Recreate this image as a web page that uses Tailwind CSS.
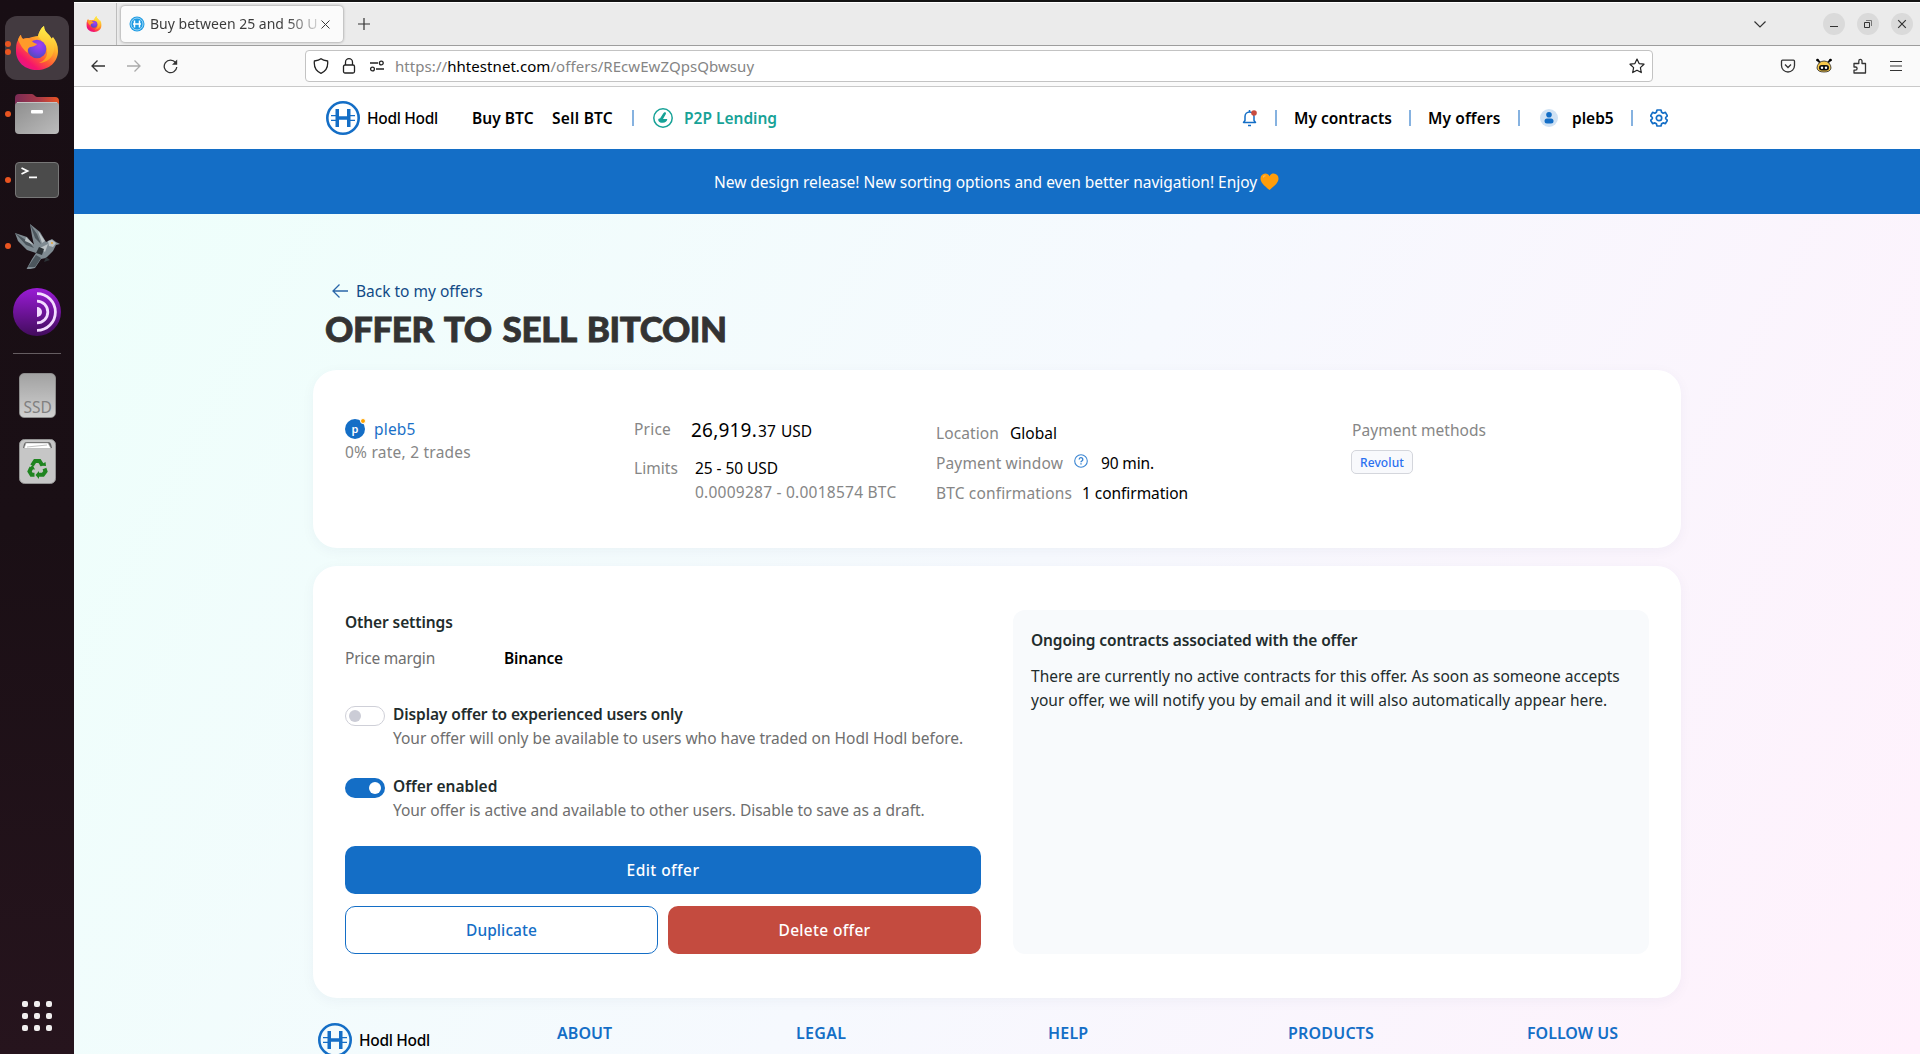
<!DOCTYPE html>
<html lang="en">
<head>
<meta charset="utf-8">
<title>Buy between 25 and 50 USD</title>
<script src="https://cdn.jsdelivr.net/npm/@tailwindcss/browser@4"></script>
</head>
<body class="w-[1920px] h-[1054px] overflow-hidden bg-[#141011] font-['Noto_Sans',sans-serif] text-[15.5px] leading-6 text-black">
<svg class="absolute size-0">
  <defs>
    <linearGradient id="ffBody" x1=".85" y1=".1" x2=".2" y2=".95"><stop offset="0" stop-color="#fff44f"/><stop offset=".3" stop-color="#ffb02a"/><stop offset=".6" stop-color="#ff5a36"/><stop offset=".85" stop-color="#f5156c"/><stop offset="1" stop-color="#e31587"/></linearGradient>
    <linearGradient id="ffFlame" x1=".5" y1="0" x2=".4" y2="1"><stop offset="0" stop-color="#fff14a"/><stop offset="1" stop-color="#ff9a1f"/></linearGradient>
    <radialGradient id="ffGlobe" cx=".6" cy=".3" r=".8"><stop offset="0" stop-color="#a93df0"/><stop offset=".5" stop-color="#7542e5"/><stop offset="1" stop-color="#4a4fa8"/></radialGradient>
    <linearGradient id="gray" x1="0" y1="0" x2="1" y2="1"><stop offset="0" stop-color="#8e8e8e"/><stop offset="1" stop-color="#bcbcbc"/></linearGradient>
    <linearGradient id="orange" x1="0" y1="0" x2="1" y2="0"><stop offset="0" stop-color="#7a2b55"/><stop offset=".55" stop-color="#a83a48"/><stop offset="1" stop-color="#ea5423"/></linearGradient>
    <linearGradient id="tor" x1="0" y1="0" x2="0" y2="1"><stop offset="0" stop-color="#9a1bd6"/><stop offset="1" stop-color="#420c5d"/></linearGradient>
    <symbol id="firefox" viewBox="0 0 42 44">
      <path fill="url(#ffBody)" d="M2 14C3 11 4 10 5 9c0 2 1 3 2 4 2-1 4-1 6-1 3-1 6-2 9-2 1-4 3-8 6-10 0 4 2 6 5 9 1 1 2 3 2 4l2-2c3 4 5 8 5 14 0 11-9 19-21 19S0 36 0 25c0-4 0-8 2-11z"/>
      <path fill="url(#ffFlame)" d="M22 10c1-4 3-8 6-10 0 4 2 6 5 9 4 5 6 9 5 15-1 8-8 13-15 13 6-2 9-7 8-13-1-6-5-8-9-14z"/>
      <circle cx="21" cy="23" r="9.3" fill="url(#ffGlobe)"/>
      <path fill="#ff9a2a" d="M2 14C3 11 4 9 5 9c0 2 1 3 2 4 3-1 5-1 7 0 2 2 3 4 7 5-1 2-5 3-7 3-2 1-3 3-2 6-5-3-8-9-10-13z"/>
    </symbol>
    <symbol id="hodl" viewBox="0 0 34 34">
      <circle cx="17" cy="17" r="15.7" fill="none" stroke="#146ec6" stroke-width="2.6"/>
      <path fill="#146ec6" d="M9.500 8h3.500v18h-3.500zM21 8h3.500v18h-3.500zM13 15.300h8v3.400h-8zM5 14h5v1.300H5zM5 18.700h5V20H5zM24 14h5v1.300h-5zM24 18.700h5V20h-5z"/>
    </symbol>
  </defs>
</svg>
<div class="flex h-[1054px] w-[1920px]">

  <!-- Dock -->
  <aside class="flex h-full w-[74px] shrink-0 flex-col bg-linear-to-b from-[#180e14] via-[#1a0f15] to-[#26141d] pt-[15px]">
    <div class="relative flex h-[66px] items-center justify-center">
      <div class="flex size-16 items-center justify-center rounded-xl bg-[#433a40]"><svg class="size-[44px] -mt-px" viewBox="0 0 42 44"><use href="#firefox"/></svg></div>
      <i class="absolute left-[5px] top-[26px] size-1.5 rounded-full bg-[#e95420]"></i><i class="absolute left-[5px] top-[34px] size-1.5 rounded-full bg-[#e95420]"></i>
    </div>
    <div class="relative flex h-[66px] items-center justify-center">
      <svg class="h-[42px] w-[46px]" viewBox="0 0 46 42"><path fill="url(#orange)" d="M1 5a4 4 0 0 1 4-4h13c2 0 3 3 5 3h18a4 4 0 0 1 4 4v8H1z"/><rect x="1" y="9" width="44" height="32" rx="4" fill="url(#gray)"/><path d="M3 9.500h40" stroke="#c4c4c4"/><rect x="17" y="17" width="12" height="3.500" rx="1" fill="#fff"/></svg>
      <i class="absolute left-[5px] top-[30px] size-1.5 rounded-full bg-[#e95420]"></i>
    </div>
    <div class="relative flex h-[66px] items-center justify-center">
      <div class="h-9 w-11 rounded-[4px] border border-[#777] bg-[#4b4b4b]"><svg class="h-full w-full" viewBox="0 0 42 34" fill="none" stroke="#fff" stroke-width="1.800"><path d="M5.500 5l6 3-6 3M13 14.300h8"/></svg></div>
      <i class="absolute left-[5px] top-[30px] size-1.5 rounded-full bg-[#e95420]"></i>
    </div>
    <div class="relative flex h-[66px] items-center justify-center">
      <svg class="size-[46px]" viewBox="0 0 46 46"><path fill="#7f8b92" d="M1 10l12 4 7 8-2-9-2-12 10 8 6 10 6-3 4 3 4 2-4 1-3 6-7 7-5 1-6 9-9 2 6-11 4-6-9-3-9-9z"/><path fill="#4c565d" d="M1 10l14 9 5 6-8-3zM16 1l7 10 4 10-6-6zM14 44l8-12 5 3-6 9z"/><path fill="#bcc3c6" d="M34 18l4-1 4 3-3 4-4-1zM26 25l8-4-3 8zM12 14l8 8-9-4zM24 8l7 10-3 2z"/><path fill="#2c3236" d="M25 24l5 2-2 6-6-2zM32 34l4 3-6 2z"/><circle cx="38" cy="20" r="1" fill="#e0a33c"/></svg>
      <i class="absolute left-[5px] top-[30px] size-1.5 rounded-full bg-[#e95420]"></i>
    </div>
    <div class="flex h-[66px] items-center justify-center">
      <svg class="size-12" viewBox="0 0 48 48"><circle cx="24" cy="24" r="24" fill="url(#tor)"/><path fill="#f3dcff" d="M24 19a5 5 0 0 1 0 10z"/><path fill="none" stroke="#f3dcff" stroke-width="2.800" d="M24 13.200a10.800 10.800 0 0 1 0 21.600M24 5.600a18.400 18.400 0 0 1 0 36.800"/></svg>
    </div>
    <div class="mx-[13px] mt-2 h-px bg-[#655d61]"></div>
    <div class="mt-2 flex h-[66px] items-center justify-center">
      <div class="relative h-[45px] w-[37px] overflow-hidden rounded-[5px] border border-[#8c8c8c] bg-linear-to-b from-[#a2a2a2] to-[#d0d0d0]"><span class="absolute left-[4px] top-[23px] text-[15.5px] leading-5 text-[#808080]">SSD</span></div>
    </div>
    <div class="flex h-[66px] items-center justify-center">
      <svg class="h-[45px] w-[37px]" viewBox="0 0 37 45"><rect x=".5" y=".5" width="36" height="44" rx="5" fill="#c6c6c6" stroke="#929292"/><path fill="#666" d="M4 9l1-4q.5-2 3-2h21q2.500 0 3 2l1 4z"/><path fill="#fff" stroke="#aaa" stroke-width=".6" d="M5 9.500L7 4h22l3 5.500z"/><path d="M8 8l20-2" stroke="#999" stroke-width=".6"/>
        <g transform="translate(18.500 29)" fill="none" stroke="#1f8420" stroke-width="4"><path d="M-5.500 -2.500L-2.500 -7H2L5 -2.500"/><path d="M7 .5L8 3.500 5.500 6.800H0.500"/><path d="M-3 6.800H-6L-8 3.500-6 -.5"/><path fill="#1f8420" stroke="none" d="M2 -2.500l6.500.5L8 -6zM1.500 3v8L-2 7zM-9 1l4-4 2.500 4.500z"/></g></svg>
    </div>
    <div class="mx-auto mb-[23px] mt-auto grid grid-cols-3 gap-1.5">
      <i class="size-1.5 rounded-[2px] bg-[#f0eeee]"></i><i class="size-1.5 rounded-[2px] bg-[#f0eeee]"></i><i class="size-1.5 rounded-[2px] bg-[#f0eeee]"></i>
      <i class="size-1.5 rounded-[2px] bg-[#f0eeee]"></i><i class="size-1.5 rounded-[2px] bg-[#f0eeee]"></i><i class="size-1.5 rounded-[2px] bg-[#f0eeee]"></i>
      <i class="size-1.5 rounded-[2px] bg-[#f0eeee]"></i><i class="size-1.5 rounded-[2px] bg-[#f0eeee]"></i><i class="size-1.5 rounded-[2px] bg-[#f0eeee]"></i>
    </div>
  </aside>

  <!-- Browser window -->
  <div class="flex w-[1846px] flex-col border-t-2 border-[#141414]">
    <div class="flex h-[44px] shrink-0 items-center border-b border-t border-b-[#9d9d9d] border-t-white bg-[#ebebeb]">
      <svg class="ml-3 size-4" viewBox="0 0 42 44"><use href="#firefox"/></svg>
      <div class="ml-[14px] h-full w-px bg-[#bdbdbd]"></div>
      <div class="ml-1 flex h-9 w-[222px] items-center rounded-[4px] bg-[#fbfbfb] shadow-[0_0_3px_rgba(0,0,0,0.45)]">
        <svg class="ml-2 size-4" viewBox="0 0 16 16"><circle cx="8" cy="8" r="7.500" fill="#1e9be3"/><circle cx="8" cy="8" r="6" fill="none" stroke="#d6effc" stroke-width=".7"/><path d="M5.500 4.500v7M10.500 4.500v7M4 8h8" stroke="#fff" stroke-width="1.500"/></svg>
        <span class="ml-[5px] w-[170px] overflow-hidden whitespace-nowrap bg-linear-to-r from-[#3a3a3a] from-80% to-[#3a3a3a]/15 bg-clip-text text-[14px] text-transparent">Buy between 25 and 50 U</span>
        <svg class="ml-px size-[9px]" viewBox="0 0 9 9" stroke="#3a3a3a" fill="none"><path d="M.5.5l8 8M8.500.5l-8 8"/></svg>
      </div>
      <svg class="ml-[15px] size-3" viewBox="0 0 12 12" stroke="#333" stroke-width="1.200"><path d="M6 0v12M0 6h12"/></svg>
      <svg class="ml-auto h-[7px] w-3" viewBox="0 0 12 7" fill="none" stroke="#333" stroke-width="1.200"><path d="M.5.5L6 6 11.500.5"/></svg>
      <div class="ml-[57px] mr-[7px] flex gap-3">
        <div class="flex size-[22px] items-center justify-center rounded-full bg-[#dadada]"><svg class="size-2.5" viewBox="0 0 10 10" stroke="#333" fill="none"><path d="M1 7.500h8"/></svg></div>
        <div class="flex size-[22px] items-center justify-center rounded-full bg-[#dadada]"><svg class="size-2.5" viewBox="0 0 10 10" stroke="#333" fill="none"><path d="M1.500 3.500h5v5h-5z"/><path d="M3 1.500h5.500V7" stroke="#777"/></svg></div>
        <div class="flex size-[22px] items-center justify-center rounded-full bg-[#dadada]"><svg class="size-2.5" viewBox="0 0 10 10" stroke="#333" fill="none" stroke-width="1.200"><path d="M1.200 1.200l7.600 7.600M8.800 1.200L1.200 8.800"/></svg></div>
      </div>
    </div>
    <div class="flex h-[41px] shrink-0 items-center border-b border-[#c9c9c9] bg-[#fafafa]">
      <svg class="ml-[17px] h-3 w-[14px]" viewBox="0 0 14 12" fill="none" stroke="#333" stroke-width="1.300"><path d="M6.500.5L1 6l5.500 5.500M1 6h13"/></svg>
      <svg class="ml-[22px] h-3 w-[14px]" viewBox="0 0 14 12" fill="none" stroke="#aaa" stroke-width="1.300"><path d="M7.500.5L13 6l-5.500 5.500M13 6H0"/></svg>
      <svg class="ml-[22px] size-[15px]" viewBox="0 0 15 15" fill="none" stroke="#333" stroke-width="1.300"><path d="M12.500 3.500A6.300 6.300 0 1 0 13.800 8M12.500 3.500"/><path fill="#333" stroke="none" d="M14.200.5v5.200H9z"/></svg>
      <div class="ml-[127px] flex h-8 w-[1348px] items-center rounded-[4px] border border-[#c3c3c3] bg-white">
        <svg class="ml-[7px] size-4" viewBox="0 0 16 16" fill="none" stroke="#222" stroke-width="1.300"><path d="M8 .8c2 1.700 4.500 2 6.600 2.200.6 5.400-1 10-6.600 12.300C2.400 13 .8 8.400 1.400 3 3.500 2.800 6 2.500 8 .8z"/></svg>
        <svg class="ml-3 size-4" viewBox="0 0 16 16" fill="none" stroke="#222" stroke-width="1.300"><rect x="2.500" y="7" width="11" height="8" rx="1.500"/><path d="M4.500 7V4.200a3.500 3.500 0 0 1 7 0V7"/></svg>
        <svg class="ml-3 size-4" viewBox="0 0 16 16" fill="none" stroke="#222" stroke-width="1.300"><circle cx="12.300" cy="5" r="1.900"/><path d="M1 5h8M7 11h8"/><circle cx="3.500" cy="11" r="1.900"/></svg>
        <span class="ml-[10px] whitespace-nowrap text-[15px] tracking-[0.06px] text-[#858585]">https://<span class="text-black">hhtestnet.com</span>/offers/REcwEwZQpsQbwsuy</span>
        <svg class="ml-auto mr-[7px] size-4" viewBox="0 0 16 16" fill="none" stroke="#222" stroke-width="1.200" stroke-linejoin="round"><path d="M8 1l2.100 4.600 4.900.6-3.600 3.400.9 5L8 12.200l-4.300 2.400.9-5L1 6.200l4.900-.6z"/></svg>
      </div>
      <svg class="ml-[127px] size-4" viewBox="0 0 16 16" fill="none" stroke="#333" stroke-width="1.300"><path d="M2.500 2.200h11q1 0 1 1v4.300a6.500 6.500 0 0 1-13 0V3.200q0-1 1-1z"/><path d="M5 6.500l3 3 3-3"/></svg>
      <svg class="ml-5 size-4" viewBox="0 0 16 16"><path d="M1 1.500l3 3M15 1.500l-3 3" stroke="#111" stroke-width="2"/><circle cx="1.500" cy="2" r="1.300"/><circle cx="14.500" cy="2" r="1.300"/><path fill="#f8c94a" stroke="#222" stroke-width=".8" d="M1 10a7 7 0 0 1 14 0q-.5 4-7 4t-7-4z"/><rect x="3" y="7" width="10" height="5.500" rx="2.700" fill="#111"/><circle cx="6" cy="9.700" r="1.200" fill="#fff"/><circle cx="10" cy="9.700" r="1.200" fill="#fff"/></svg>
      <svg class="ml-5 size-4" viewBox="0 0 16 16" fill="none" stroke="#333" stroke-width="1.300" stroke-linejoin="round"><path d="M2 15h11.500V5.500H10V3a1.600 1.600 0 0 0-3.200 0v2.500H2V9h1.500a1.500 1.500 0 0 1 0 3.200H2z"/></svg>
      <svg class="ml-5 size-4" viewBox="0 0 16 16" stroke="#333" stroke-width="1.200"><path d="M2 3.500h12M2 8h12M2 12.500h12"/></svg>
    </div>

    <!-- Site header -->
    <header class="flex h-[62px] shrink-0 items-center whitespace-nowrap bg-white font-semibold">
      <svg class="ml-[252px] size-[34px]"><use href="#hodl"/></svg>
      <span class="ml-[7px] w-[71px] font-medium tracking-[-0.31px]">Hodl Hodl</span>
      <span class="ml-[34px] w-[62px] tracking-[0.05px]">Buy BTC</span>
      <span class="ml-[18px] w-[62px] tracking-[0.25px]">Sell BTC</span>
      <i class="ml-[18px] h-4 w-0.5 bg-[#86b2e0]"></i>
      <svg class="ml-[19px] size-5" viewBox="0 0 20 20"><circle cx="10" cy="10" r="9.200" fill="none" stroke="#17a297" stroke-width="1.500"/><path fill="#17a297" d="M12.200 4.300c1 .3 1 1.300.4 2.300L10 11h4.300c-.3 2.600-2.300 3.900-4.600 3.800-2.700 0-4.500-1.400-4.500-2.900 0-1 .8-1.200 1.800-1.300l3-4.800c.6-1 1.300-1.700 2.200-1.500z"/></svg>
      <span class="ml-[11px] w-[94px] text-[#17a297]">P2P Lending</span>
      <svg class="ml-[463px] h-[18px] w-[17px]" viewBox="0 0 17 18" fill="none" stroke="#146ec6" stroke-width="1.500"><path d="M2.500 13.500h12L13 11.500V7.500A4.500 4.500 0 0 0 4 7.500v4z" stroke-linejoin="round"/><path d="M7 16.500h3M8.500 1v2"/><circle cx="13" cy="4" r="2.800" fill="#c84c40" stroke="none"/></svg>
      <i class="ml-[17px] h-4 w-0.5 bg-[#86b2e0]"></i>
      <span class="ml-[17px] w-[98px] tracking-[0.02px]">My contracts</span>
      <i class="ml-[17px] h-4 w-0.5 bg-[#86b2e0]"></i>
      <span class="ml-[17px] w-[73px] tracking-[0.12px]">My offers</span>
      <i class="ml-[17px] h-4 w-0.5 bg-[#86b2e0]"></i>
      <svg class="ml-5 size-[18px]" viewBox="0 0 18 18"><circle cx="9" cy="9" r="9" fill="#d0e2f4"/><circle cx="9" cy="5.700" r="2.800" fill="#146ec6"/><rect x="4.500" y="9.500" width="9" height="5" rx="2.500" fill="#146ec6"/></svg>
      <span class="ml-[14px] w-[42px]">pleb5</span>
      <i class="ml-[17px] h-4 w-0.5 bg-[#86b2e0]"></i>
      <svg class="ml-[17px] size-[18px]" viewBox="0 0 18 18" fill="none" stroke="#146ec6" stroke-width="1.700" stroke-linejoin="round"><path d="M7 1h4l.6 2.300 1.500.9 2.300-.8 2 3.400L15.700 8.500v1.200l1.700 1.600-2 3.300-2.300-.7-1.500.9L11 17H7l-.6-2.200-1.500-.9-2.300.7-2-3.300 1.700-1.600V8.500L.6 6.800l2-3.400 2.300.8 1.500-.9z"/><circle cx="9" cy="9" r="2.700"/></svg>
    </header>
    <div class="flex h-[65px] shrink-0 items-center whitespace-nowrap bg-[#146ec6] text-white">
      <span class="ml-[640px] w-[543px] tracking-[-0.02px]">New design release! New sorting options and even better navigation! Enjoy</span>
      <svg class="ml-[3px] h-[17px] w-[19px]" viewBox="0 0 19 17"><path fill="#ff9d0a" d="M9.500 17C4 12.500.5 9.500.5 5.500A5 5 0 0 1 5.300.5c2 0 3.400 1 4.200 2.800C10.300 1.500 11.700.5 13.700.5a5 5 0 0 1 4.800 5c0 4-3.500 7-9 11.500z"/><path fill="#ffb84a" d="M3 3q2-1.500 3 0-2 .5-3 2z"/></svg>
    </div>

    <!-- Page -->
    <main class="flex w-[1846px] grow flex-col whitespace-nowrap bg-linear-118 from-[#eefffb] via-[#f6f9fe] via-50% to-[#fff1fc] pl-[239px]">
      <div class="mt-[65px] flex h-6 items-center text-[#114a86]">
        <svg class="ml-[19px] h-[14px] w-4" viewBox="0 0 16 14" fill="none" stroke="#2a66a8" stroke-width="1.300"><path d="M7.500.5L1 7l6.500 6.500M1 7h15"/></svg>
        <span class="ml-2">Back to my offers</span>
      </div>
      <h1 class="ml-[12px] mt-1 h-[45px] font-['Lato'] text-[35px] font-black leading-[42px] tracking-[-0.4px] text-[#333] [-webkit-text-stroke:0.8px_#333] [word-spacing:3px]">OFFER TO SELL BITCOIN</h1>

      <section class="mt-[18px] flex h-[178px] w-[1368px] shrink-0 rounded-3xl bg-white shadow-[0_3px_14px_rgba(30,40,90,0.045)]">
        <div class="ml-8 w-[289px] pt-[47px] text-[#868686]">
          <div class="flex h-6 items-center text-[#1a70c7]">
            <div class="relative flex size-5 items-center justify-center rounded-full bg-[#146ec6] text-[11px] font-semibold leading-5 text-white">p<i class="absolute -right-px -top-px size-[6px] rounded-full border border-white bg-[#ffa400]"></i></div>
            <span class="ml-[9px] tracking-[0.2px]">pleb5</span>
          </div>
          <div class="-mt-px tracking-[0.23px]">0% rate, 2 trades</div>
        </div>
        <div class="w-[302px] pt-[47px]">
          <div class="flex h-6 items-center"><span class="w-[57px] tracking-[0.2px] text-[#868686]">Price</span><span class="mt-px w-[67px] text-[19px] tracking-[0.2px]">26,919.</span><span class="mt-[3px] w-[23px] tracking-[0.1px]">37</span><span class="mt-[3px]">USD</span></div>
          <div class="mt-[15px] flex h-6 items-center"><span class="w-[61px] tracking-[0.06px] text-[#868686]">Limits</span><span class="tracking-[-0.06px]">25 - 50 USD</span></div>
          <div class="ml-[61px] tracking-[0.24px] text-[#868686]">0.0009287 - 0.0018574 BTC</div>
        </div>
        <div class="w-[416px] pt-[51px] text-[#868686]">
          <div class="mb-1.5 flex h-6 items-center"><span class="w-[74px] tracking-[0.1px]">Location</span><span class="text-black">Global</span></div>
          <div class="mb-1.5 flex h-6 items-center"><span class="w-[138px] tracking-[0.15px]">Payment window</span><svg class="-mt-1 mr-[13px] size-[14px]" viewBox="0 0 14 14" fill="none" stroke="#3a85d2" stroke-width="1.100"><circle cx="7" cy="7" r="6.300"/><path d="M5.200 5.400a1.800 1.800 0 1 1 2.500 1.700q-.7.400-.7 1.200M7 9.300v1.300" stroke-width="1.400"/></svg><span class="tracking-[-0.14px] text-black">90 min.</span></div>
          <div class="flex h-6 items-center"><span class="w-[146px] tracking-[0.15px]">BTC confirmations</span><span class="tracking-[-0.05px] text-black">1 confirmation</span></div>
        </div>
        <div class="pt-12 text-[#868686]">
          <div class="tracking-[0.06px]">Payment methods</div>
          <div class="-ml-px mt-2 flex h-6 w-[62px] items-center justify-center rounded-[5px] border border-[#d4d6dc] bg-[#f8f9fc] pt-px text-[12px] font-medium tracking-[0.11px] text-[#2a70f0]">Revolut</div>
        </div>
      </section>

      <section class="mt-[18px] flex h-[432px] w-[1368px] shrink-0 rounded-3xl bg-white pl-8 pt-11 text-[#6e6e6e] shadow-[0_3px_14px_rgba(30,40,90,0.045)]">
        <div class="w-[636px]">
          <div class="font-semibold tracking-[-0.1px] text-[#222c2c]">Other settings</div>
          <div class="mt-3 flex h-6"><span class="w-[159px] tracking-[-0.21px]">Price margin</span><span class="font-semibold tracking-[-0.2px] text-black">Binance</span></div>
          <div class="mt-8 flex">
            <div class="mt-1 flex h-5 w-10 shrink-0 items-center rounded-full border border-[#cfd0d8] pl-[3px]"><i class="size-3 rounded-full bg-[#cbccd6]"></i></div>
            <div class="ml-2"><div class="font-semibold tracking-[-0.11px] text-[#222c2c]">Display offer to experienced users only</div><div class="tracking-[-0.01px]">Your offer will only be available to users who have traded on Hodl Hodl before.</div></div>
          </div>
          <div class="mt-6 flex">
            <div class="mt-1 flex h-5 w-10 shrink-0 items-center justify-end rounded-full bg-[#146ec6] pr-1"><i class="size-3 rounded-full bg-white"></i></div>
            <div class="ml-2"><div class="font-semibold text-[#222c2c]">Offer enabled</div><div class="tracking-[-0.04px]">Your offer is active and available to other users. Disable to save as a draft.</div></div>
          </div>
          <div class="mt-6 grid grid-cols-2 gap-x-2.5 gap-y-3 font-medium text-white">
            <div class="col-span-2 flex h-12 items-center justify-center rounded-[10px] bg-[#146ec6] tracking-[0.44px]">Edit offer</div>
            <div class="flex h-12 items-center justify-center rounded-[10px] border border-[#146ec6] tracking-[0.07px] text-[#146ec6]">Duplicate</div>
            <div class="flex h-12 items-center justify-center rounded-[10px] bg-[#c44b3f] tracking-[0.32px]">Delete offer</div>
          </div>
        </div>
        <div class="ml-8 h-[344px] w-[636px] rounded-xl bg-[#f8fafc] pl-[18px] pt-[18px] text-[#222c2c]">
          <div class="font-semibold tracking-[-0.13px]">Ongoing contracts associated with the offer</div>
          <p class="mt-3 tracking-[0.01px]">There are currently no active contracts for this offer. As soon as someone accepts<br>your offer, we will notify you by email and it will also automatically appear here.</p>
        </div>
      </section>

      <footer class="mt-[23px] flex h-[33px] w-[1368px] shrink-0 text-[16px] font-semibold text-[#146ec6]">
        <svg class="ml-[5px] mt-[2px] size-[34px] shrink-0"><use href="#hodl"/></svg>
        <span class="ml-[7px] mt-[7px] w-[198px] text-[15.5px] font-medium tracking-[-0.31px] text-black">Hodl Hodl</span>
        <span class="w-[239px] tracking-[0.05px]">ABOUT</span>
        <span class="w-[252px] tracking-[0.3px]">LEGAL</span>
        <span class="w-[240px] tracking-[0.2px]">HELP</span>
        <span class="w-[239px] tracking-[0.2px]">PRODUCTS</span>
        <span>FOLLOW US</span>
      </footer>
    </main>
  </div>
</div>
</body>
</html>
